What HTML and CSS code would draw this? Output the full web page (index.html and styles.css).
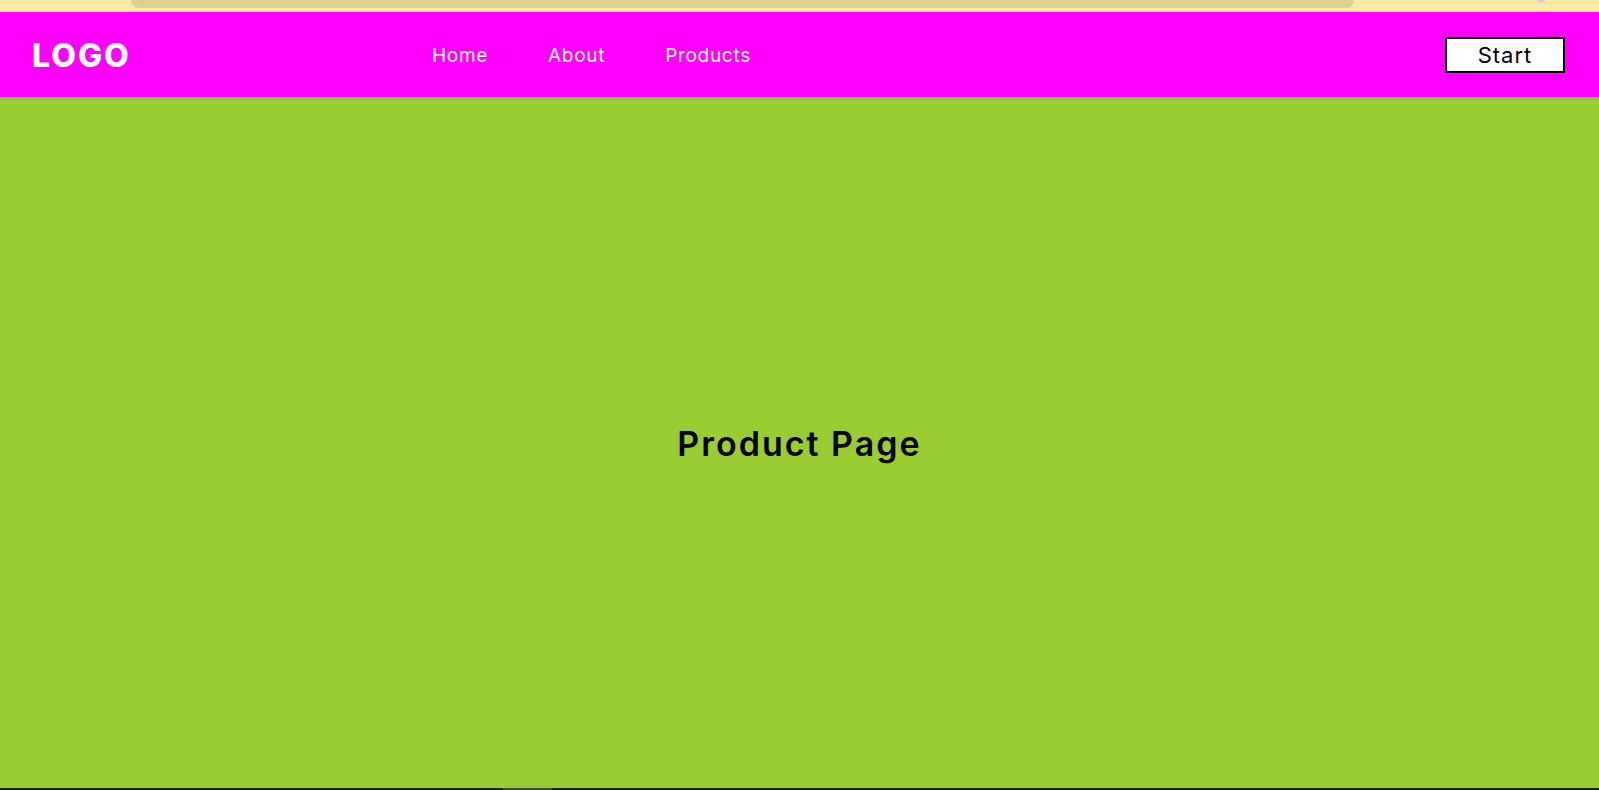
FILE: index.html
```html
<!DOCTYPE html>
<html lang="en">
<head>
<meta charset="utf-8">
<title>Product Page</title>
<link rel="stylesheet" href="styles.css">
</head>
<body>
<div class="chrome-strip">
  <div class="urlbar"></div>
  <div class="chrome-icon"></div>
</div>
<header class="site-header">
  <div class="logo">LOGO</div>
  <nav class="nav">
    <a class="nav-link" href="#">Home</a>
    <a class="nav-link" href="#">About</a>
    <a class="nav-link" href="#">Products</a>
  </nav>
  <button class="start-btn">Start</button>
</header>
<main class="main">
  <h1 class="title">Product Page</h1>
</main>
<div class="bottom-bar"><div class="thumb"></div></div>
</body>
</html>
```

FILE: styles.css
```css
* { box-sizing: border-box; }
html, body { margin: 0; padding: 0; }
body {
  width: 1599px;
  height: 790px;
  overflow: hidden;
  font-family: Inter, "Noto Sans", sans-serif;
  display: flex;
  flex-direction: column;
}
.chrome-strip {
  height: 12px;
  background: #f8eba2;
  border-bottom: 1px solid #e2d58f;
  display: flex;
  align-items: flex-start;
}
.urlbar {
  margin-left: 131px;
  width: 1223px;
  height: 8px;
  background: #dbd290;
  border-radius: 0 0 11px 11px;
}
.chrome-icon {
  margin-left: 183px;
  margin-top: -3px;
  width: 8px;
  height: 6px;
  border-radius: 50%;
  background: #e6c8c8;
}
.site-header {
  height: 85px;
  background: #ff00ff;
  display: flex;
  align-items: center;
  padding: 0 34px 0 32px;
}
.logo {
  width: 400px;
  color: #ffffff;
  font-size: 32px;
  font-weight: 800;
  letter-spacing: 2px;
  line-height: 1;
  padding-top: 2px;
}
.nav {
  display: flex;
  gap: 60px;
  padding-top: 2px;
}
.nav-link {
  color: #ffffff;
  text-decoration: none;
  font-size: 19px;
  font-weight: 400;
  letter-spacing: 0.7px;
}
.start-btn {
  margin-left: auto;
  width: 120px;
  height: 36px;
  background: #ffffff;
  border: 2px solid #000000;
  border-radius: 0;
  font-family: Inter, "Noto Sans", sans-serif;
  font-size: 22px;
  color: #000000;
  padding: 0;
  letter-spacing: 1px;
}
.main {
  height: 691px;
  background: #9acd32;
  display: flex;
  align-items: center;
  justify-content: center;
}
.title {
  margin: 0;
  font-size: 34px;
  font-weight: 600;
  color: #000000;
  letter-spacing: 2px;
  padding-top: 2px;
}
.bottom-bar {
  height: 2px;
  background: #1f1f1f;
}
.thumb {
  margin-left: 503px;
  width: 49px;
  height: 2px;
  background: #4a4a4a;
}
```
